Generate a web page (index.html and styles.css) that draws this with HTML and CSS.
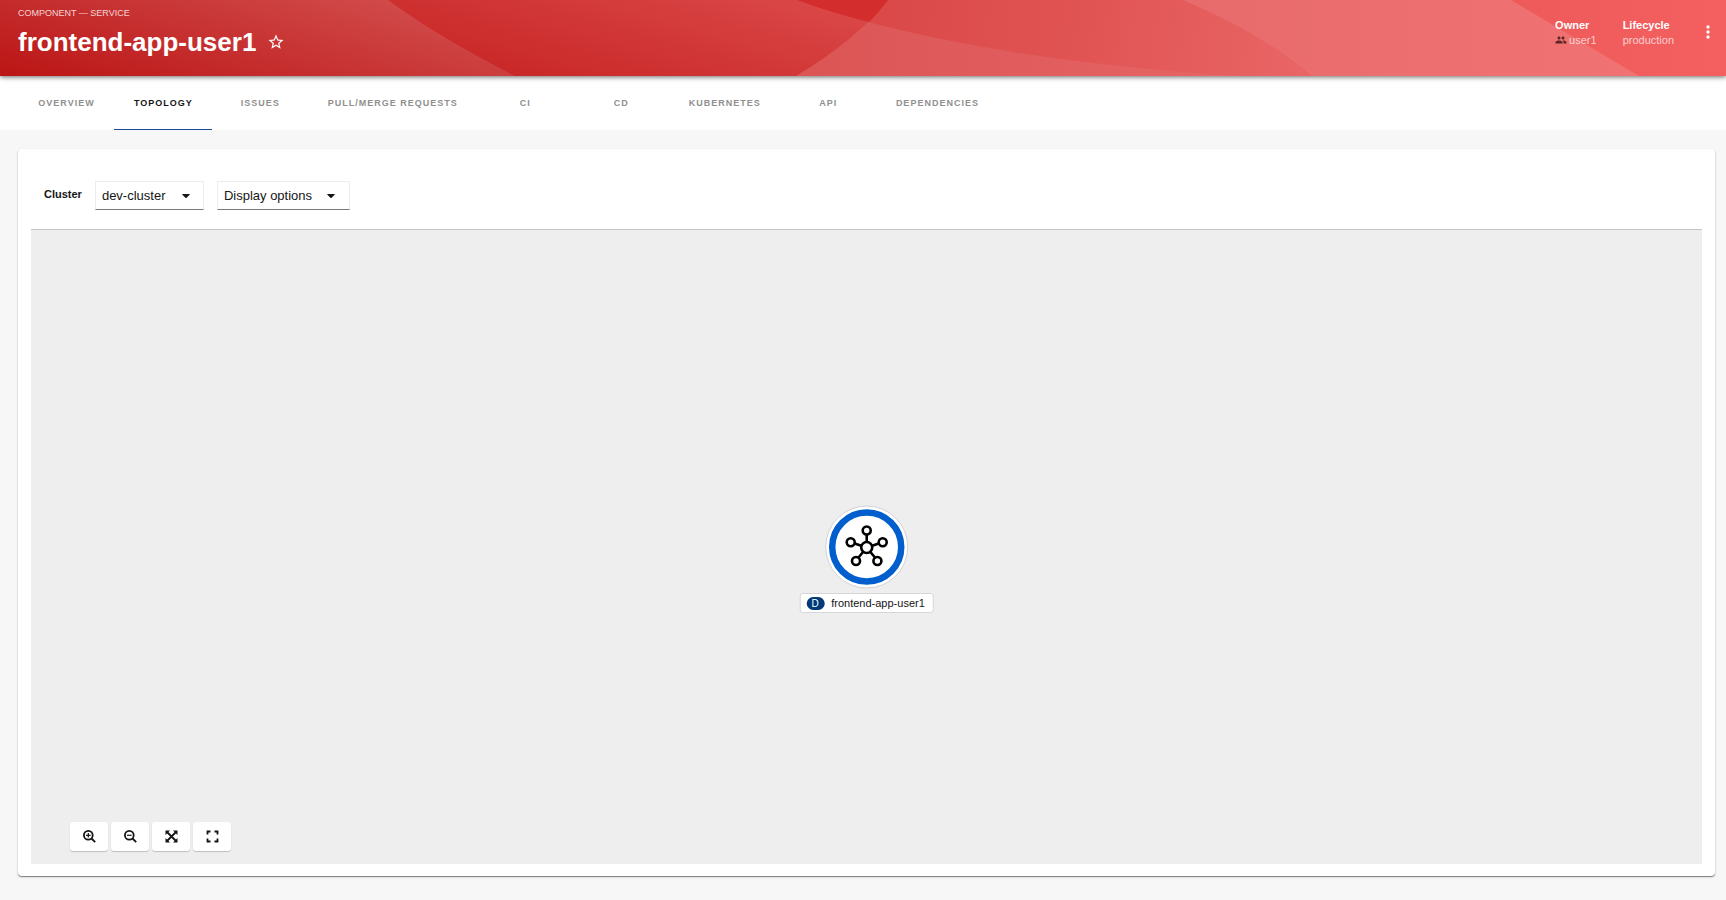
FILE: index.html
```html
<!DOCTYPE html>
<html lang="en">
<head>
<meta charset="utf-8">
<title>frontend-app-user1</title>
<meta name="viewport" content="width=device-width, initial-scale=1">
<link rel="stylesheet" href="styles.css">
</head>
<body>
<header class="header">
  <svg class="header-art" viewBox="0 0 1726 76" preserveAspectRatio="none" aria-hidden="true">
    <defs>
      <linearGradient id="g-a" gradientUnits="userSpaceOnUse" x1="0" y1="76" x2="45" y2="-90"><stop offset="0" stop-color="#bb1515"/><stop offset="1" stop-color="#d14949"/></linearGradient>
      <linearGradient id="g-b" gradientUnits="userSpaceOnUse" x1="500" y1="76" x2="540" y2="-70"><stop offset="0" stop-color="#c92727"/><stop offset="1" stop-color="#da4646"/></linearGradient>
      <linearGradient id="g-d" gradientUnits="userSpaceOnUse" x1="870" y1="0" x2="1300" y2="76"><stop offset="0" stop-color="#da4848"/><stop offset=".5" stop-color="#e15454"/><stop offset="1" stop-color="#e96565"/></linearGradient>
      <linearGradient id="g-e" gradientUnits="userSpaceOnUse" x1="800" y1="0" x2="1240" y2="0"><stop offset="0" stop-color="#db5555"/><stop offset="1" stop-color="#e76565"/></linearGradient>
      <linearGradient id="g-f" gradientUnits="userSpaceOnUse" x1="1183" y1="0" x2="1639" y2="0"><stop offset="0" stop-color="#e86b6b"/><stop offset="1" stop-color="#f17272"/></linearGradient>
      <linearGradient id="g-g" gradientUnits="userSpaceOnUse" x1="1511" y1="0" x2="1726" y2="0"><stop offset="0" stop-color="#ee5a5a"/><stop offset="1" stop-color="#f46060"/></linearGradient>
    </defs>
    <rect width="1726" height="76" fill="url(#g-g)"/>
    <path d="M0 0H1511L1639 76H0Z" fill="url(#g-f)"/>
    <path d="M0 0H1183Q1267 36 1312 76H0Z" fill="url(#g-d)"/>
    <path d="M797 0Q960 58 1240 76H797Z" fill="url(#g-e)"/>
    <path d="M0 0H888Q856 40 796 76H0Z" fill="url(#g-b)"/>
    <path d="M797 0H888Q879 12 869 22Q832 13 797 0Z" fill="#d32d2d"/>
    <path d="M0 0H388Q440 38 515 76H0Z" fill="url(#g-a)"/>
  </svg>
  <div class="heading">
    <p class="kind">COMPONENT — SERVICE</p>
    <div class="title-row">
      <h1 class="title">frontend-app-user1</h1>
      <button class="icon-button" aria-label="Add to favorites">
        <svg width="18" height="18" viewBox="0 0 24 24" fill="currentColor"><path d="M22 9.24l-7.19-.62L12 2 9.19 8.63 2 9.24l5.46 4.73L5.82 21 12 17.27 18.18 21l-1.63-7.03L22 9.24zM12 15.4l-3.76 2.27 1-4.28-3.32-2.88 4.38-.38L12 6.1l1.71 4.04 4.38.38-3.32 2.88 1 4.28L12 15.4z"/></svg>
      </button>
    </div>
  </div>
  <dl class="facts">
    <div class="fact">
      <dt>Owner</dt>
      <dd><a class="owner" href="#user1"><svg class="group-icon" width="12" height="12" viewBox="0 0 24 24" fill="currentColor" aria-hidden="true"><path d="M16 11c1.66 0 2.99-1.34 2.99-3S17.66 5 16 5s-3 1.34-3 3 1.34 3 3 3zm-8 0c1.66 0 2.99-1.34 2.99-3S9.66 5 8 5 5 6.34 5 8s1.34 3 3 3zm0 2c-2.33 0-7 1.17-7 3.5V19h14v-2.500c0-2.330-4.670-3.500-7-3.500zm8 0c-.29 0-.62.02-.97.05 1.160.840 1.970 1.970 1.970 3.450V19h6v-2.500c0-2.330-4.670-3.500-7-3.500z"/></svg>user1</a></dd>
    </div>
    <div class="fact">
      <dt>Lifecycle</dt>
      <dd>production</dd>
    </div>
  </dl>
  <button class="icon-button menu-button" aria-label="More">
    <svg width="20" height="20" viewBox="0 0 24 24" fill="currentColor"><circle cx="12" cy="6" r="2"/><circle cx="12" cy="12" r="2"/><circle cx="12" cy="18" r="2"/></svg>
  </button>
</header>
<nav class="tabs">
  <a class="tab" href="#overview">OVERVIEW</a>
  <a class="tab tab-active" href="#topology" aria-current="page">TOPOLOGY</a>
  <a class="tab" href="#issues">ISSUES</a>
  <a class="tab" href="#requests">PULL/MERGE REQUESTS</a>
  <a class="tab" href="#ci">CI</a>
  <a class="tab" href="#cd">CD</a>
  <a class="tab" href="#kubernetes">KUBERNETES</a>
  <a class="tab" href="#api">API</a>
  <a class="tab" href="#dependencies">DEPENDENCIES</a>
</nav>
<main class="content">
  <section class="card">
    <div class="toolbar">
      <label class="cluster-label" for="cluster">Cluster</label>
      <div class="select-wrap">
        <select class="field cluster-select" id="cluster"><option>dev-cluster</option></select>
        <svg class="caret select-caret" width="8" height="4" viewBox="0 0 8 4" aria-hidden="true"><path d="M.6 0H7.400Q8 .2 7.600.800L4.600 3.700Q4 4.200 3.400 3.700L.4.800Q0 .2.6 0Z"/></svg>
      </div>
      <button class="field display-button">Display options
        <svg class="caret" width="8" height="4" viewBox="0 0 8 4" aria-hidden="true"><path d="M.6 0H7.400Q8 .2 7.600.800L4.600 3.700Q4 4.200 3.400 3.700L.4.800Q0 .2.6 0Z"/></svg>
      </button>
    </div>
    <div class="canvas">
      <div class="node">
        <svg class="node-icon" width="84" height="84" viewBox="0 0 84 84" aria-hidden="true">
          <circle cx="42" cy="42" r="41" fill="#fff" stroke="#d2d2d2"/>
          <circle cx="42" cy="42" r="34.500" fill="#fff" stroke="#005fcc" stroke-width="6.500"/>
          <g fill="none" stroke="#000" stroke-width="2.600">
            <path d="M42 30v7M30 38.500l6.500 2.300M54 38.500l-6.500 2.300M38.300 47l-4.500 5.500M45.700 47l4.500 5.500"/>
            <circle cx="42" cy="42.500" r="5.500"/>
            <circle cx="42" cy="25.500" r="4"/>
            <circle cx="26" cy="37.300" r="4"/>
            <circle cx="58" cy="37.300" r="4"/>
            <circle cx="31.300" cy="56" r="4"/>
            <circle cx="52.700" cy="56" r="4"/>
          </g>
        </svg>
        <div class="node-label"><span class="badge">D</span><span>frontend-app-user1</span></div>
      </div>
      <div class="controls">
        <button class="control" aria-label="Zoom in"><svg width="13" height="13" viewBox="0 0 13 13"><circle cx="5.300" cy="5.300" r="4.400"/><path d="M8.500 8.500L12.200 12.200"/><path class="thin" d="M3 5.300h4.600M5.300 3v4.600"/></svg></button>
        <button class="control" aria-label="Zoom out"><svg width="13" height="13" viewBox="0 0 13 13"><circle cx="5.300" cy="5.300" r="4.400"/><path d="M8.500 8.500L12.200 12.200"/><path class="thin" d="M3 5.300h4.600"/></svg></button>
        <button class="control" aria-label="Fit to screen"><svg width="13" height="13" viewBox="0 0 13 13"><path d="M2 2L11 11M11 2L2 11"/><path class="solid" d="M.5.5H5L.5 5ZM12.500.5V5L8 .5ZM.5 12.500V8L5 12.500ZM12.500 12.500H8L12.500 8Z"/></svg></button>
        <button class="control" aria-label="Reset view"><svg width="13" height="13" viewBox="0 0 13 13"><path d="M1.500 4.500V1.500H4.500M8.500 1.500H11.500V4.500M11.500 8.500V11.500H8.500M4.500 11.500H1.500V8.500"/></svg></button>
      </div>
    </div>
  </section>
</main>
</body>
</html>
```
FILE: styles.css
```css
* { box-sizing: border-box; }

body {
  margin: 0;
  min-height: 100vh;
  display: flex;
  flex-direction: column;
  background: #f7f7f7;
  color: #151515;
  font-family: "Liberation Sans", Arial, sans-serif;
}

button, select { font-family: inherit; color: inherit; cursor: pointer; }
a { color: inherit; text-decoration: none; }

.header {
  position: relative;
  z-index: 1;
  display: flex;
  align-items: flex-start;
  min-height: 76px;
  padding: 0 8px 0 18px;
  color: #fff;
  background: #d84040;
  box-shadow: 0 1px 5px rgba(0, 0, 0, .6);
}

.header-art {
  position: absolute;
  inset: 0;
  z-index: -1;
  width: 100%;
  height: 100%;
}

.heading { flex: 1; padding-top: 7px; }

.kind {
  margin: 0;
  font-size: 9px;
  line-height: 12px;
  color: rgba(255, 255, 255, .8);
}

.title-row { display: flex; align-items: center; gap: 11px; padding-top: 7px; }
.title { margin: 0; font-size: 26px; line-height: 32px; font-weight: 700; }

.icon-button {
  display: flex;
  padding: 0;
  border: 0;
  background: none;
  color: #fff;
}

.facts { display: flex; gap: 26px; margin: 18px 0 0; font-size: 11px; line-height: 15px; }
.fact { min-width: 41px; }
.facts dt { font-weight: 700; }
.facts dd { margin: 0; color: rgba(255, 255, 255, .7); }
.owner { display: flex; align-items: center; gap: 2px; line-height: 14px; }
.group-icon { color: #5c2424; }
.menu-button { margin: 22px 0 0 24px; }

.tabs {
  display: flex;
  flex-wrap: wrap;
  padding: 0 18px;
  background: #fff;
}

.tab {
  min-width: 96px;
  padding: 20px 19px 18px 20px;
  border-bottom: 1px solid transparent;
  font-size: 9px;
  line-height: 15px;
  font-weight: 700;
  letter-spacing: 1px;
  text-align: center;
  color: #8f8f8f;
}

.tab-active { color: #151515; border-color: #1f4a94; }

.content { flex: 1; display: flex; padding: 19px 11px 24px 18px; }

.card {
  flex: 1;
  display: flex;
  flex-direction: column;
  padding: 0 13px 12px;
  background: #fff;
  border-radius: 4px;
  box-shadow: 0 1px 1px rgba(0, 0, 0, .45), 0 1px 3px rgba(0, 0, 0, .12);
}

.toolbar {
  display: flex;
  align-items: center;
  min-height: 80px;
  padding: 13px 13px 0;
}

.cluster-label { margin-right: 13px; padding-bottom: 3px; font-size: 11px; line-height: 20px; font-weight: 700; }

.field {
  height: 29px;
  padding: 0 6px;
  border: 1px solid #ededed;
  border-bottom-color: #7a7a7a;
  border-radius: 0;
  background: #fff;
  font-size: 13px;
}

.select-wrap { position: relative; margin-right: 13px; }
.cluster-select { display: block; width: 109px; appearance: none; }
.caret { fill: #151515; }
.select-caret { position: absolute; right: 14px; top: 13px; pointer-events: none; }

.display-button {
  display: flex;
  align-items: center;
  justify-content: space-between;
  width: 133px;
  padding-right: 14px;
}

.canvas {
  position: relative;
  flex: 1;
  min-height: 320px;
  background: #eee;
  border-top: 1px solid #c6c6c6;
}

.node {
  position: absolute;
  left: 50%;
  top: 50%;
  display: flex;
  flex-direction: column;
  align-items: center;
  gap: 4px;
  transform: translate(-50%, -42px);
}

.node-icon { display: block; }

.node-label {
  display: flex;
  align-items: center;
  gap: 7px;
  height: 20px;
  padding: 0 8px 0 6px;
  border: 1px solid #d6d6d6;
  border-radius: 3px;
  background: #fff;
  font-size: 11px;
  white-space: nowrap;
}

.badge {
  width: 18px;
  border-radius: 7px;
  background: #003a78;
  color: #fff;
  font-size: 10px;
  line-height: 13px;
  text-align: center;
}

.controls { position: absolute; left: 39px; bottom: 13px; display: flex; gap: 3px; }

.control {
  display: flex;
  align-items: center;
  justify-content: center;
  width: 38px;
  height: 29px;
  padding: 0;
  border: 0;
  border-radius: 3px;
  background: #fff;
  box-shadow: 0 1px 1px rgba(0, 0, 0, .2);
}

.control svg { fill: none; stroke: #151515; stroke-width: 1.8; }
.control .thin { stroke-width: 1.2; }
.control .solid { fill: #151515; stroke: none; }
```
